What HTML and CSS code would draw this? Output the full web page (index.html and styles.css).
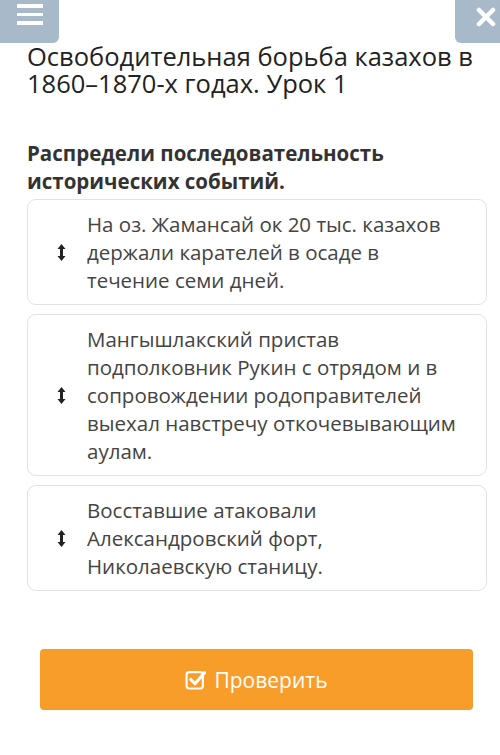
FILE: index.html
```html
<!DOCTYPE html>
<html lang="ru">
<head>
  <meta charset="UTF-8" />
  <meta name="viewport" content="width=device-width, initial-scale=1.0"/>
  <title>Урок 1</title>
  <link rel="stylesheet" href="styles.css">
</head>
<body>
  <header class="topbar">
    <button class="menu-btn" aria-label="Меню">
      <span></span><span></span><span></span>
    </button>
    <button class="close-btn" aria-label="Закрыть">
      <svg viewBox="0 0 20 20" width="20" height="20">
        <path d="M3 3 L17 17 M17 3 L3 17" stroke="#fff" stroke-width="4.5" stroke-linecap="round"/>
      </svg>
    </button>
  </header>

  <main class="lesson">
    <h1>Освободительная борьба казахов в 1860–1870-х годах. Урок 1</h1>

    <h2 class="task">Распредели последовательность исторических событий.</h2>

    <ul class="sortable">
      <li class="item">
        <span class="handle">
          <svg viewBox="0 0 9 17" width="9" height="17">
            <path d="M4.5 3 V14" stroke="#222" stroke-width="3"/>
            <path d="M0.5 5 L4.5 0 L8.5 5 Z M0.5 12 L4.5 17 L8.5 12 Z" fill="#222"/>
          </svg>
        </span>
        <p>На оз. Жамансай ок 20 тыс. казахов держали карателей в осаде в течение семи дней.</p>
      </li>
      <li class="item">
        <span class="handle">
          <svg viewBox="0 0 9 17" width="9" height="17">
            <path d="M4.5 3 V14" stroke="#222" stroke-width="3"/>
            <path d="M0.5 5 L4.5 0 L8.5 5 Z M0.5 12 L4.5 17 L8.5 12 Z" fill="#222"/>
          </svg>
        </span>
        <p>Мангышлакский пристав подполковник Рукин с отрядом и в сопровождении родоправителей выехал навстречу откочевывающим аулам.</p>
      </li>
      <li class="item">
        <span class="handle">
          <svg viewBox="0 0 9 17" width="9" height="17">
            <path d="M4.5 3 V14" stroke="#222" stroke-width="3"/>
            <path d="M0.5 5 L4.5 0 L8.5 5 Z M0.5 12 L4.5 17 L8.5 12 Z" fill="#222"/>
          </svg>
        </span>
        <p>Восставшие атаковали Александровский форт, Николаевскую станицу.</p>
      </li>
    </ul>

    <button class="check-btn">
      <svg viewBox="0 0 20 20" width="21" height="21">
        <rect x="1.5" y="3" width="15.5" height="15.5" rx="2.5" fill="none" stroke="#fff" stroke-width="2"/>
        <path d="M5.5 10 L9.5 14 L18.5 3.5" fill="none" stroke="#fff" stroke-width="3" stroke-linecap="round" stroke-linejoin="round"/>
      </svg>
      Проверить
    </button>
  </main>
</body>
</html>
```

FILE: styles.css
```css
:root {
  --nav: #a8b9ca;
  --accent: #f99d2a;
  --text: #222222;
  --muted: #444444;
}

body {
  margin: 0;
  font-family: 'Open Sans', 'Noto Sans', sans-serif;
  background: #ffffff;
  color: var(--text);
}

.topbar {
  display: flex;
  justify-content: space-between;
  height: 43px;
}

.menu-btn {
  width: 59px;
  height: 43px;
  border: none;
  padding: 4px 0 0 17px;
  background: var(--nav);
  border-bottom-right-radius: 6px;
  display: flex;
  flex-direction: column;
  gap: 5px;
  align-items: flex-start;
}

.menu-btn span {
  display: block;
  width: 26px;
  height: 3.5px;
  background: #fff;
}

.close-btn {
  width: 45px;
  height: 43px;
  border: none;
  padding: 0 0 10px 16px;
  background: var(--nav);
  border-bottom-left-radius: 6px;
  display: flex;
  align-items: center;
  justify-content: center;
}

.lesson {
  padding: 0 13px 0 27px;
}

h1 {
  margin: 0;
  font-size: 25.5px;
  font-weight: 400;
  line-height: 27px;
  color: var(--text);
}

.task {
  margin: 42px 0 4px;
  font-size: 20.5px;
  font-weight: 700;
  line-height: 28px;
  color: #333;
}

.sortable {
  list-style: none;
  margin: 0;
  padding: 0;
  display: flex;
  flex-direction: column;
  gap: 9px;
}

.item {
  display: flex;
  align-items: center;
  border: 1px solid #e2e2e2;
  border-radius: 9px;
  padding: 10px 26px 10px 0;
}

.handle {
  flex: none;
  width: 59px;
  padding-left: 29px;
  box-sizing: border-box;
  display: flex;
  align-items: center;
}

.item p {
  flex: 1;
  margin: 0;
  font-size: 20.5px;
  line-height: 28px;
  color: var(--muted);
}

.check-btn {
  display: flex;
  align-items: center;
  justify-content: center;
  gap: 8px;
  width: 433px;
  height: 61px;
  margin: 58px 0 0 13px;
  border: none;
  border-radius: 4px;
  background: var(--accent);
  color: #fff;
  font-family: 'Open Sans', 'Noto Sans', sans-serif;
  font-size: 21px;
}
```
